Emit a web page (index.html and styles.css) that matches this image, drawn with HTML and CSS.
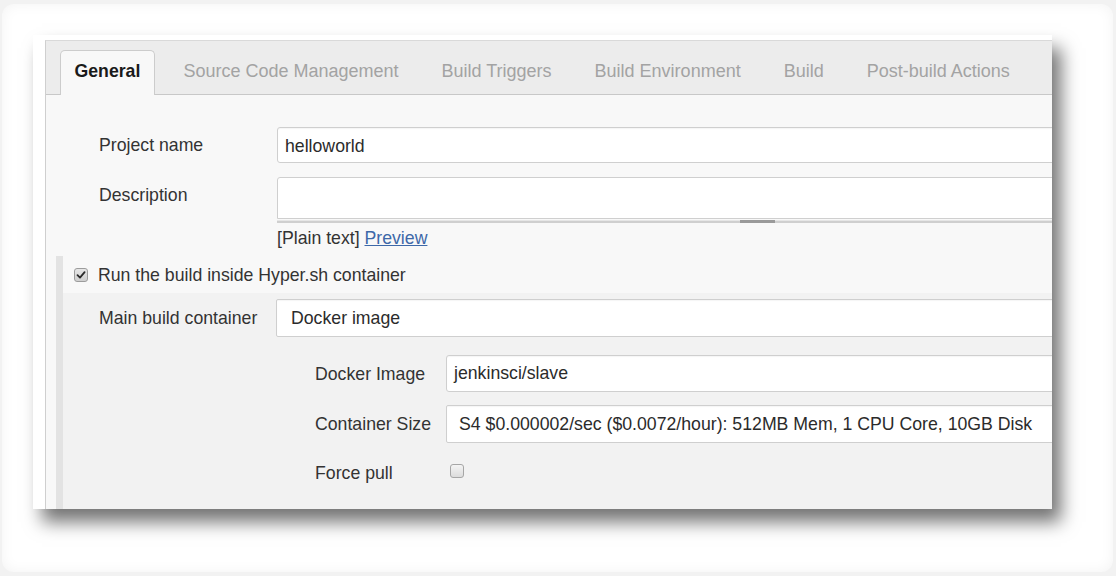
FILE: index.html
```html
<!DOCTYPE html>
<html>
<head>
<meta charset="utf-8">
<link rel="stylesheet" href="styles.css">
</head>
<body>
<div class="frame">
  <div class="shot">
    <div class="win">
      <div class="tabbar">
        <div class="tab active">General</div>
        <div class="tab">Source Code Management</div>
        <div class="tab">Build Triggers</div>
        <div class="tab">Build Environment</div>
        <div class="tab">Build</div>
        <div class="tab">Post-build Actions</div>
      </div>
      <div class="content">
        <div class="row row-name">
          <div class="label">Project name</div>
          <div class="field"><div class="input">helloworld</div></div>
        </div>
        <div class="row row-desc">
          <div class="label label-top">Description</div>
          <div class="field">
            <div class="textarea"></div>
            <div class="grip"><span class="handle"></span></div>
            <div class="hint">[Plain text] <a class="link" href="#">Preview</a></div>
          </div>
        </div>
        <div class="section">
          <div class="sec-head"><span class="cb checked"><svg viewBox="0 0 14 14" width="14" height="14"><path d="M3.5 7.2 L6 9.6 L10.6 4.2" fill="none" stroke="#2a2a2a" stroke-width="1.8" stroke-linecap="round" stroke-linejoin="round"/></svg></span>Run the build inside Hyper.sh container</div>
          <div class="sec-body">
            <div class="row row-main">
              <div class="label">Main build container</div>
              <div class="field"><div class="input select">Docker image</div></div>
            </div>
            <div class="sub">
              <div class="row row-image">
                <div class="label sub-label">Docker Image</div>
                <div class="field"><div class="input">jenkinsci/slave</div></div>
              </div>
              <div class="row row-size">
                <div class="label sub-label">Container Size</div>
                <div class="field"><div class="input select size">S4 $0.000002/sec ($0.0072/hour): 512MB Mem, 1 CPU Core, 10GB Disk</div></div>
              </div>
              <div class="row row-pull">
                <div class="label sub-label">Force pull</div>
                <div class="field"><span class="cb"></span></div>
              </div>
            </div>
          </div>
        </div>
      </div>
    </div>
  </div>
</div>
</body>
</html>
```
FILE: styles.css
```css
* { box-sizing: border-box; }
html, body { margin: 0; padding: 0; }
body {
  background: #f2f2f2;
  font-family: "Liberation Sans", Arial, sans-serif;
  font-size: 17.7px;
  color: #333;
  width: 1116px;
  height: 576px;
  overflow: hidden;
}
.frame {
  margin: 4px 3px 0 2px;
  width: 1111px;
  height: 568px;
  background: #fff;
  border-radius: 12px;
  box-shadow: inset 0 0 14px rgba(0,0,0,0.05);
  padding: 31px 0 0 31px;
}
.shot {
  width: 1019px;
  height: 474px;
  background: #fff;
  padding: 5px 0 0 12px;
  box-shadow: 9px 13px 17px rgba(0,0,0,0.55);
}
.win {
  height: 100%;
  border-left: 1px solid #cfcfcf;
  border-top: 1px solid #d9d9d9;
  overflow: hidden;
  background: #f8f8f8;
  display: flex;
  flex-direction: column;
}
.tabbar {
  height: 54px;
  flex: none;
  background: #ececec;
  border-bottom: 1px solid #c8c8c8;
  display: flex;
  align-items: flex-end;
  padding-left: 14px;
  gap: 14px;
}
.tab {
  height: 45px;
  padding: 11px 14.5px 0;
  line-height: 20px;
  font-size: 18px;
  color: #a3a3a3;
  white-space: nowrap;
  margin-bottom: -1px;
}
.tab.active {
  background: #f8f8f8;
  border: 1px solid #cccccc;
  border-bottom: none;
  border-radius: 5px 5px 0 0;
  color: #1a1a1a;
  font-weight: bold;
  font-size: 17.7px;
  padding: 10px 13.5px 0;
}
.content {
  flex: 1;
  padding-top: 32px;
  padding-left: 53px;
  display: flex;
  flex-direction: column;
}
.row {
  display: flex;
  align-items: center;
}
.label {
  width: 178px;
  flex: none;
  line-height: 20px;
  color: #333;
  white-space: nowrap;
}
.label-top { align-self: flex-start; padding-top: 8px; }
.field {
  flex: 1;
  margin-right: -40px;
  min-width: 0;
}
.input {
  height: 36px;
  background: #fff;
  border: 1px solid #cfcfcf;
  border-radius: 3px;
  box-shadow: inset 0 1px 1px rgba(0,0,0,0.04);
  padding-left: 7px;
  padding-top: 1px;
  line-height: 34px;
  color: #2b2b2b;
  white-space: nowrap;
}
.row-desc { margin-top: 14px; align-items: flex-start; }
.textarea {
  height: 42px;
  background: #fff;
  border: 1px solid #cfcfcf;
  border-radius: 3px 3px 0 0;
}
.grip {
  margin-top: 1px;
  height: 3px;
  background: #cfcfcf;
  border-top: 1px solid #e6e6e6;
  position: relative;
}
.handle {
  position: absolute;
  left: 463px;
  top: -1px;
  width: 35px;
  height: 3px;
  background: #9a9a9a;
}
.hint {
  margin-top: 5px;
  line-height: 20px;
  color: #333;
}
.link {
  color: #3d68a8;
  text-decoration: underline;
}
.section {
  margin-top: 8px;
  margin-left: -43px;
  border-left: 7px solid #e3e3e3;
  flex: 1;
  display: flex;
  flex-direction: column;
}
.sec-head {
  height: 37px;
  display: flex;
  align-items: center;
  padding-left: 11px;
  line-height: 20px;
}
.cb {
  width: 14px;
  height: 14px;
  flex: none;
  border: 1px solid #a6a6a6;
  border-radius: 3px;
  background: linear-gradient(#f4f4f4, #dcdcdc);
  display: inline-block;
}
.cb svg { display: block; margin: -1px 0 0 -1px; }
.cb.checked {
  margin-right: 10px;
  background: linear-gradient(#e6e6e6, #cfcfcf);
  border-color: #9c9c9c;
}
.sec-body {
  flex: 1;
  background: #f2f2f2;
  padding-top: 6px;
  padding-left: 36px;
}
.row-main .label { width: 177px; }
.select {
  height: 38px;
  line-height: 36px;
  padding-top: 0;
  padding-left: 14px;
  border-radius: 2px;
}
.sub {
  padding-left: 216px;
  display: flex;
  flex-direction: column;
}
.sub-label { width: 131px; }
.row-image { margin-top: 18px; }
.row-image .input { height: 37px; line-height: 35px; padding-top: 0; }
.row-size { margin-top: 13px; }
.size { padding-left: 12px; }
.row-pull { margin-top: 20px; height: 20px; }
.row-pull .cb { margin-left: 4px; margin-top: -4px; display: block; }
```
